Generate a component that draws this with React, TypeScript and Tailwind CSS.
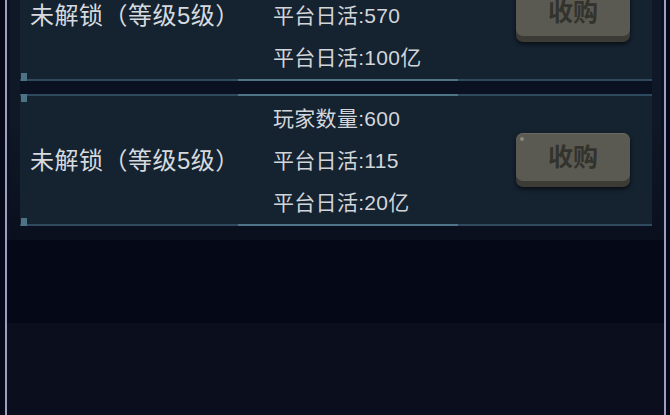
const FONT = { fontFamily: '"Liberation Sans", "Noto Sans CJK SC", sans-serif' };

interface Item {
  stats: string[];
}

const items: Item[] = [
  { stats: ['玩家数量:300', '平台日活:570', '平台日活:100亿'] },
  { stats: ['玩家数量:600', '平台日活:115', '平台日活:20亿'] },
];

function Edge({ top }: { top?: boolean }) {
  return (
    <div className="relative h-[2px]">
      <div className="absolute inset-0 bg-[#2f4a5e]" />
      <div className="absolute left-[218px] w-[220px] h-[2px] bg-[#4f7488]" />
      <div
        className={`absolute left-[1px] w-[6px] h-[8px] bg-[#4c7484] ${top ? 'top-0' : 'bottom-0'}`}
      />
    </div>
  );
}

function Card({ item, first }: { item: Item; first?: boolean }) {
  return (
    <div className={`flex flex-col bg-[#152230] ${first ? '-mt-[51px]' : ''}`}>
      <Edge top />
      <div className="flex items-center h-[128px]">
        <div className="w-[253px] pl-[10px] pt-[2px] text-[24px] tracking-[0.5px] text-[#d6dadf] leading-none">
          未解锁（等级5级）
        </div>
        <div className="flex flex-col gap-[20px] pt-[2px] text-[21px] tracking-[0.3px] text-[#d2d6da] leading-[22px] w-[243px]">
          {item.stats.map((s) => (
            <div key={s}>{s}</div>
          ))}
        </div>
        <button className="w-[114px] h-[54px] rounded-[7px] bg-[#3c3b36] shadow-[0_2px_4px_rgba(0,0,0,0.6)] flex flex-col">
          <div className="relative h-[48px] rounded-[7px] bg-[#5b5a52] border-t border-[#6a695f] flex items-center justify-center text-[25px] font-semibold text-[#33332d]">
            <span className="absolute left-[4px] top-[3px] w-[4px] h-[4px] rounded-full bg-[#8a897e]" />
            收购
          </div>
        </button>
      </div>
      <Edge />
    </div>
  );
}

export default function App() {
  return (
    <div className="w-[670px] h-[415px] overflow-hidden bg-[#090b17] flex" style={FONT}>
      <div className="w-[5px] bg-[#07091a]" />
      <div className="w-[2px] bg-[#9c9fbd]" />
      <div className="flex-1 flex flex-col bg-[#0c1020]">
        <div className="h-[240px] flex flex-col px-[3px]">
          <div className="flex-1 flex flex-col pl-[10px] pr-[9px] bg-gradient-to-b from-[#0f1826] via-[#0f1826] to-[#0a0f1e]">
            <Card item={items[0]} first />
            <div className="h-[13px] bg-[#0a1120]" />
            <Card item={items[1]} />
          </div>
        </div>
        <div className="h-[83px] bg-[#050817]" />
        <div className="flex-1 bg-[#0b0e1c]" />
      </div>
      <div className="w-[2px] bg-[#9c9fbd]" />
      <div className="w-[4px] bg-[#07091a]" />
    </div>
  );
}
